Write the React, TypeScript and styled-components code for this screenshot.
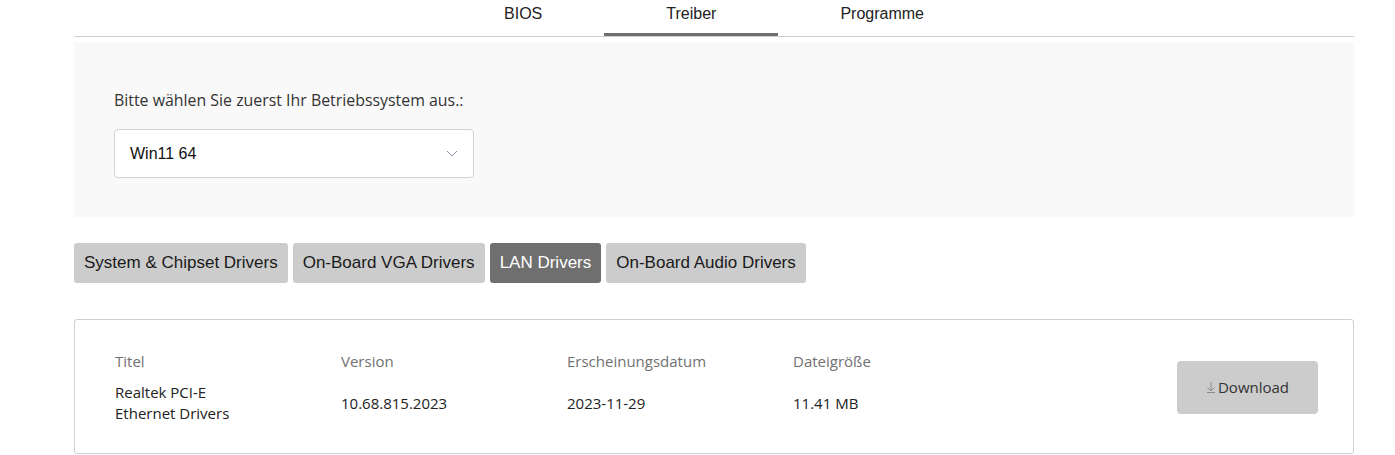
import React, { useState } from "react";
import styled, { createGlobalStyle } from "styled-components";

const GlobalStyle = createGlobalStyle`
  body {
    margin: 0;
    background: #fff;
    font-family: "Open Sans", "Noto Sans", sans-serif;
    color: #222;
  }
`;

const Page = styled.div`
  width: 1280px;
  margin-left: 74px;
`;

const TabBar = styled.nav`
  display: flex;
  justify-content: center;
  border-bottom: 1px solid #cfcfcf;
  height: 36px;
`;

const Tab = styled.button<{ active?: boolean }>`
  border: none;
  background: none;
  padding: 1px 62px 0;
  height: 36px;
  font-family: "Liberation Sans", Arial, sans-serif;
  font-size: 16px;
  color: #222;
  line-height: 26px;
  display: flex;
  align-items: flex-start;
  border-bottom: 3px solid ${(p) => (p.active ? "#6f6f6f" : "transparent")};
  box-sizing: border-box;
  cursor: pointer;
`;

const OsPanel = styled.section`
  margin-top: 5px;
  background: #f9f9f9;
  padding: 46px 40px 39px;
`;

const OsLabel = styled.div`
  font-size: 15.9px;
  line-height: 24px;
  color: #333;
  margin-bottom: 17px;
`;

const SelectBox = styled.div`
  width: 360px;
  height: 49px;
  box-sizing: border-box;
  background: #fff;
  border: 1px solid #d3d3d3;
  border-radius: 4px;
  display: flex;
  align-items: center;
  justify-content: space-between;
  padding: 0 15px;
  font-family: "Liberation Sans", Arial, sans-serif;
  font-size: 16px;
  color: #111;
`;

const Categories = styled.div`
  display: flex;
  gap: 5px;
  margin-top: 26px;
`;

const CatButton = styled.button<{ active?: boolean }>`
  height: 40px;
  border: none;
  border-radius: 3px;
  padding: 0 10px;
  background: ${(p) => (p.active ? "#6f6f6f" : "#cccccc")};
  color: ${(p) => (p.active ? "#fff" : "#1a1a1a")};
  font-family: "Liberation Sans", Arial, sans-serif;
  font-size: 17px;
  cursor: pointer;
`;

const Card = styled.div`
  margin-top: 36px;
  border: 1px solid #d0d0d0;
  border-radius: 3px;
  display: flex;
  align-items: center;
  padding: 30px 35px 29px 40px;
`;

const Table = styled.div`
  display: grid;
  grid-template-columns: repeat(4, 226px);
  row-gap: 10px;
  align-items: center;
`;

const HeadCell = styled.div`
  font-size: 15px;
  line-height: 22px;
  color: #717171;
`;

const ValueCell = styled.div`
  font-size: 15px;
  line-height: 21px;
  color: #222;
`;

const DownloadButton = styled.button`
  margin-left: auto;
  width: 141px;
  height: 53px;
  border: none;
  border-radius: 4px;
  background: #cccccc;
  color: #333;
  font-family: "Open Sans", "Noto Sans", sans-serif;
  font-size: 15px;
  display: flex;
  align-items: center;
  justify-content: center;
  gap: 2px;
  cursor: pointer;
`;

const Chevron = () => (
  <svg width="12" height="7" viewBox="0 0 12 7">
    <path d="M1 1l5 5 5-5" fill="none" stroke="#8a94a6" strokeWidth="1" />
  </svg>
);

const DownArrow = () => (
  <svg width="10" height="12" viewBox="0 0 10 12">
    <path d="M5 1v9M1.5 6.5L5 10l3.5-3.5M1 11.5h8" fill="none" stroke="#8a8a8a" strokeWidth="1" />
  </svg>
);

const tabs = ["BIOS", "Treiber", "Programme"];
const categories = [
  "System & Chipset Drivers",
  "On-Board VGA Drivers",
  "LAN Drivers",
  "On-Board Audio Drivers",
];

const App = () => {
  const [tab, setTab] = useState("Treiber");
  const [cat, setCat] = useState("LAN Drivers");

  return (
    <Page>
      <GlobalStyle />
      <TabBar>
        {tabs.map((t) => (
          <Tab key={t} active={t === tab} onClick={() => setTab(t)}>
            {t}
          </Tab>
        ))}
      </TabBar>
      <OsPanel>
        <OsLabel>Bitte wählen Sie zuerst Ihr Betriebssystem aus.:</OsLabel>
        <SelectBox>
          <span>Win11 64</span>
          <Chevron />
        </SelectBox>
      </OsPanel>
      <Categories>
        {categories.map((c) => (
          <CatButton key={c} active={c === cat} onClick={() => setCat(c)}>
            {c}
          </CatButton>
        ))}
      </Categories>
      <Card>
        <Table>
          <HeadCell>Titel</HeadCell>
          <HeadCell>Version</HeadCell>
          <HeadCell>Erscheinungsdatum</HeadCell>
          <HeadCell>Dateigröße</HeadCell>
          <ValueCell>
            Realtek PCI-E
            <br />
            Ethernet Drivers
          </ValueCell>
          <ValueCell>10.68.815.2023</ValueCell>
          <ValueCell>2023-11-29</ValueCell>
          <ValueCell>11.41 MB</ValueCell>
        </Table>
        <DownloadButton>
          <DownArrow />
          Download
        </DownloadButton>
      </Card>
    </Page>
  );
};

export default App;
